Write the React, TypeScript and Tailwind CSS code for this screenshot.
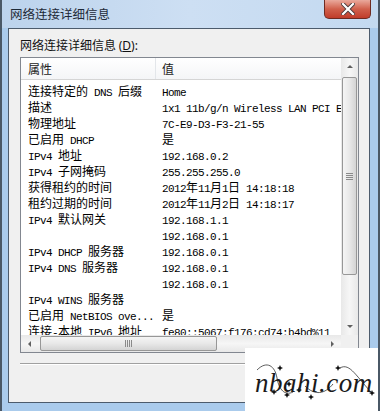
import React from "react";

const CJK = "font-['Noto_Sans_CJK_SC',sans-serif]";

function Mixed({ s }: { s: string }) {
  const parts = s.split(/([\x00-\x7F]+)/).filter((p) => p.length > 0);
  return (
    <>
      {parts.map((p, i) =>
        /^[\x00-\x7F]+$/.test(p) ? (
          <span
            key={i}
            className="font-['Liberation_Mono',monospace] text-[11px] tracking-[-0.6px] whitespace-pre"
          >
            {p}
          </span>
        ) : (
          <span key={i} className={`${CJK} text-[12px] whitespace-pre`}>
            {p}
          </span>
        )
      )}
    </>
  );
}

const rows: [string, string][] = [
  ["连接特定的 DNS 后缀", "Home"],
  ["描述", "1x1 11b/g/n Wireless LAN PCI Express Half Mini Card Adapter"],
  ["物理地址", "7C-E9-D3-F3-21-55"],
  ["已启用 DHCP", "是"],
  ["IPv4 地址", "192.168.0.2"],
  ["IPv4 子网掩码", "255.255.255.0"],
  ["获得租约的时间", "2012年11月1日 14:18:18"],
  ["租约过期的时间", "2012年11月2日 14:18:17"],
  ["IPv4 默认网关", "192.168.1.1"],
  ["", "192.168.0.1"],
  ["IPv4 DHCP 服务器", "192.168.0.1"],
  ["IPv4 DNS 服务器", "192.168.0.1"],
  ["", "192.168.0.1"],
  ["IPv4 WINS 服务器", ""],
  ["已启用 NetBIOS ove...", "是"],
  ["连接-本地 IPv6 地址", "fe80::5067:f176:cd74:b4bd%11"],
];

function Grip({ vertical }: { vertical: boolean }) {
  return vertical ? (
    <div className="flex flex-col gap-[1px]">
      <div className="w-[7px] h-[1px] bg-[#8a8a8a]" />
      <div className="w-[7px] h-[1px] bg-[#8a8a8a]" />
      <div className="w-[7px] h-[1px] bg-[#8a8a8a]" />
      <div className="w-[7px] h-[1px] bg-[#8a8a8a]" />
    </div>
  ) : (
    <div className="flex flex-row gap-[1px]">
      <div className="h-[7px] w-[1px] bg-[#8a8a8a]" />
      <div className="h-[7px] w-[1px] bg-[#8a8a8a]" />
      <div className="h-[7px] w-[1px] bg-[#8a8a8a]" />
      <div className="h-[7px] w-[1px] bg-[#8a8a8a]" />
    </div>
  );
}

function Arrow({ dir }: { dir: "up" | "down" | "left" | "right" }) {
  const pts =
    dir === "up"
      ? "1,5 4,2 7,5"
      : dir === "down"
      ? "1,2 4,5 7,2"
      : dir === "left"
      ? "5,1 2,4 5,7"
      : "2,1 5,4 2,7";
  return (
    <svg width="8" height="8" viewBox="0 0 8 8">
      <polygon points={pts} fill="#606060" />
    </svg>
  );
}

export default function App() {
  return (
    <div className="relative w-[380px] h-[411px] overflow-hidden bg-[#aacbec] border-l-2 border-r-2 border-[#4a5866] flex flex-col">
      {/* Title bar */}
      <div className="h-[28px] flex flex-row justify-between bg-gradient-to-r from-[#bcd3ec] via-[#cddff3] to-[#c3d9f0]">
        <div className={`${CJK} text-[12.5px] leading-[16px] text-[#1e2a38] pl-[8px] pt-[6px]`}>
          网络连接详细信息
        </div>
        <div className="mr-[7px] w-[47px] h-[19px] rounded-b-[5px] border border-t-0 border-[#6e2b22] bg-gradient-to-b from-[#e9a99c] via-[#d0604c] to-[#c03c2a] flex items-center justify-center">
          <svg width="14" height="12" viewBox="0 0 14 12">
            <path
              d="M2 1 L12 11 M12 1 L2 11"
              stroke="#4a3a3a"
              strokeWidth="4"
              strokeLinecap="square"
            />
            <path
              d="M2 1 L12 11 M12 1 L2 11"
              stroke="#ffffff"
              strokeWidth="2.2"
              strokeLinecap="square"
            />
          </svg>
        </div>
      </div>

      {/* Content panel */}
      <div className="ml-[6px] w-[362px] h-[375px] border border-[#4c5b6c] bg-[#f0f0f0] flex flex-col">
        <div className={`${CJK} text-[12px] leading-[16px] text-[#111] pl-[11px] pt-[8px]`}>
          网络连接详细信息 <span className="font-['Noto_Sans',sans-serif]">(<span className="underline">D</span>):</span>
        </div>

        {/* List box */}
        <div className="ml-[11px] mt-[3px] w-[339px] h-[296px] border border-[#828790] bg-white flex flex-col">
          <div className="flex flex-row h-[277px]">
            <div className="flex-1 min-w-0 overflow-hidden flex flex-col">
              {/* Header */}
              <div className="h-[22px] flex flex-row bg-gradient-to-b from-white to-[#f4f5f7] border-b border-[#d5d5d5] shrink-0">
                <div className={`${CJK} w-[135px] shrink-0 pl-[7px] text-[12px] leading-[21px] text-[#222] border-r border-[#e3e6ea]`}>
                  属性
                </div>
                <div className={`${CJK} pl-[6px] text-[12px] leading-[21px] text-[#222]`}>值</div>
              </div>
              {/* Rows */}
              <div className="pt-[2px] flex flex-col">
                {rows.map(([a, b], i) => (
                  <div key={i} className="h-[16px] leading-[16px] flex flex-row text-black whitespace-nowrap shrink-0">
                    <div className="w-[135px] shrink-0 pl-[7px] overflow-hidden">
                      <Mixed s={a} />
                    </div>
                    <div className="pl-[6px] shrink-0">
                      <Mixed s={b} />
                    </div>
                  </div>
                ))}
              </div>
            </div>
            {/* Vertical scrollbar */}
            <div className="w-[17px] shrink-0 h-[277px] flex flex-col bg-gradient-to-r from-[#e8e8e8] via-[#f6f6f6] to-[#e8e8e8]">
              <div className="h-[17px] flex items-center justify-center">
                <Arrow dir="up" />
              </div>
              <div className="mt-[2px] mx-[1px] h-[198px] rounded-[2px] border border-[#979797] bg-gradient-to-r from-[#f5f5f5] via-[#e8e8e8] to-[#d4d4d4] flex items-center justify-center">
                <Grip vertical={true} />
              </div>
              <div className="flex-1" />
              <div className="h-[17px] flex items-center justify-center">
                <Arrow dir="down" />
              </div>
            </div>
          </div>
          {/* Horizontal scrollbar */}
          <div className="flex flex-row h-[17px]">
            <div className="w-[320px] h-[17px] flex flex-row bg-gradient-to-b from-[#e8e8e8] via-[#f6f6f6] to-[#e8e8e8]">
              <div className="w-[17px] flex items-center justify-center">
                <Arrow dir="left" />
              </div>
              <div className="ml-[2px] my-[1px] w-[177px] rounded-[2px] border border-[#979797] bg-gradient-to-b from-[#f5f5f5] via-[#e8e8e8] to-[#d4d4d4] flex items-center justify-center">
                <Grip vertical={false} />
              </div>
              <div className="flex-1" />
              <div className="w-[17px] flex items-center justify-center">
                <Arrow dir="right" />
              </div>
            </div>
            <div className="w-[17px] h-[17px] bg-[#f0f0f0]" />
          </div>
        </div>

        {/* Separator */}
        <div className="ml-[11px] mt-[10px] w-[338px] h-[2px] border-t border-[#a0a0a0] border-b border-b-white" />
      </div>

      {/* Watermark */}
      <div className="absolute left-[243px] top-[348px] w-[137px] h-[63px] bg-white">
        <svg className="absolute left-0 top-0" width="137" height="63" viewBox="0 0 137 63">
          <path d="M12 22 C 22 12, 30 18, 32 30 S 40 48, 48 44" stroke="#333" strokeWidth="0.8" fill="none" />
          <path d="M60 38 C 70 48, 80 46, 88 36" stroke="#333" strokeWidth="0.8" fill="none" />
          <path d="M95 20 C 105 14, 112 30, 128 46" stroke="#333" strokeWidth="0.8" fill="none" />
          {[
            [35, 20],
            [29, 44],
            [42, 47],
            [54, 42],
            [66, 49],
            [93, 20],
            [127, 45],
            [44, 36],
          ].map(([x, y], i) => (
            <polygon
              key={i}
              transform={`translate(${x} ${y})`}
              points="0,-3 0.9,-0.9 3,0 0.9,0.9 0,3 -0.9,0.9 -3,0 -0.9,-0.9"
              fill="#111"
            />
          ))}
        </svg>
        <div className="absolute left-[10px] top-[20px] font-['Liberation_Serif',serif] italic text-[27px] leading-[30px] text-[#1a1a1a] tracking-[0.5px]">
          nbahi.com
        </div>
      </div>
    </div>
  );
}
